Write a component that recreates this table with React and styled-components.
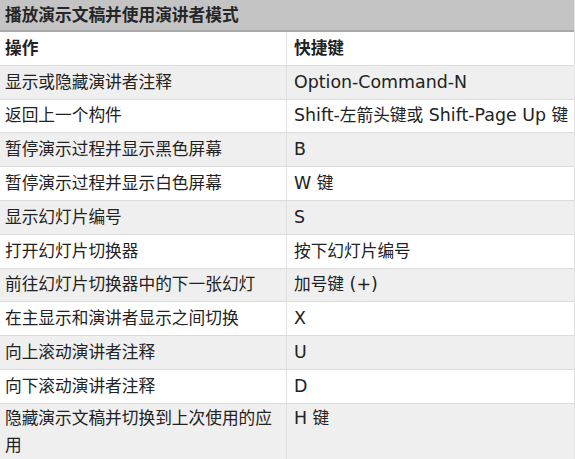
import React from 'react'
import styled, { createGlobalStyle } from 'styled-components'

const Global = createGlobalStyle`
  html, body {
    margin: 0;
    padding: 0;
    background: #fff;
  }
  body {
    font-family: "DejaVu Sans", "Noto Sans CJK SC", sans-serif;
    color: #222;
  }
`

const rows = [
  ['显示或隐藏演讲者注释', 'Option-Command-N'],
  ['返回上一个构件', 'Shift-左箭头键或 Shift-Page Up 键'],
  ['暂停演示过程并显示黑色屏幕', 'B'],
  ['暂停演示过程并显示白色屏幕', 'W 键'],
  ['显示幻灯片编号', 'S'],
  ['打开幻灯片切换器', '按下幻灯片编号'],
  ['前往幻灯片切换器中的下一张幻灯', '加号键 (+)'],
  ['在主显示和演讲者显示之间切换', 'X'],
  ['向上滚动演讲者注释', 'U'],
  ['向下滚动演讲者注释', 'D'],
  ['隐藏演示文稿并切换到上次使用的应用', 'H 键'],
]

const Sheet = styled.div`
  width: 575px;
  height: 459px;
  overflow: hidden;
  border-right: 1px solid #e2e2e2;
  box-sizing: border-box;
`

const Title = styled.div`
  height: 30px;
  background: #c4c4c4;
  border-bottom: 2px solid #a9a9a9;
  padding-left: 5px;
  font-size: 16.7px;
  font-weight: 700;
  line-height: 30px;
  color: #262626;
`

const Row = styled.div`
  display: grid;
  grid-template-columns: 286px 1fr;
  height: ${p => (p.$tall ? '55px' : '32.8px')};
  border-top: ${p => (p.$first ? 'none' : '1px solid #dcdcdc')};
  background: ${p => (p.$shade ? '#efefef' : '#fff')};
  font-size: 16.7px;
  line-height: 27px;
  font-weight: ${p => (p.$head ? 700 : 400)};
`

const Cell = styled.div`
  padding: ${p => (p.$top ? '1px' : '0')} 4px 0 ${p => (p.$right ? '7px' : '5px')};
  display: flex;
  align-items: ${p => (p.$top ? 'flex-start' : 'center')};
  border-left: ${p => (p.$right ? '1px solid #e0e0e0' : 'none')};
  white-space: ${p => (p.$right ? 'nowrap' : 'normal')};
`

const Latin = styled.span`
  font-size: 17.4px;
  line-height: 27px;
`

// latin runs render larger than the CJK glyphs in the source
const mixed = text =>
  text.split(/([\u4e00-\u9fff]+)/).filter(Boolean).map((part, i) =>
    /[\u4e00-\u9fff]/.test(part) ? part : <Latin key={i}>{part}</Latin>
  )

export default function App() {
  return (
    <>
      <Global />
      <Sheet>
        <Title>播放演示文稿并使用演讲者模式</Title>
        <Row $head $first>
          <Cell>操作</Cell>
          <Cell $right>快捷键</Cell>
        </Row>
        {rows.map(([a, b], i) => {
          const tall = i === rows.length - 1
          return (
            <Row key={a} $shade={i % 2 === 0} $tall={tall}>
              <Cell $top={tall}><span>{a}</span></Cell>
              <Cell $right $top={tall}><span>{mixed(b)}</span></Cell>
            </Row>
          )
        })}
      </Sheet>
    </>
  )
}
